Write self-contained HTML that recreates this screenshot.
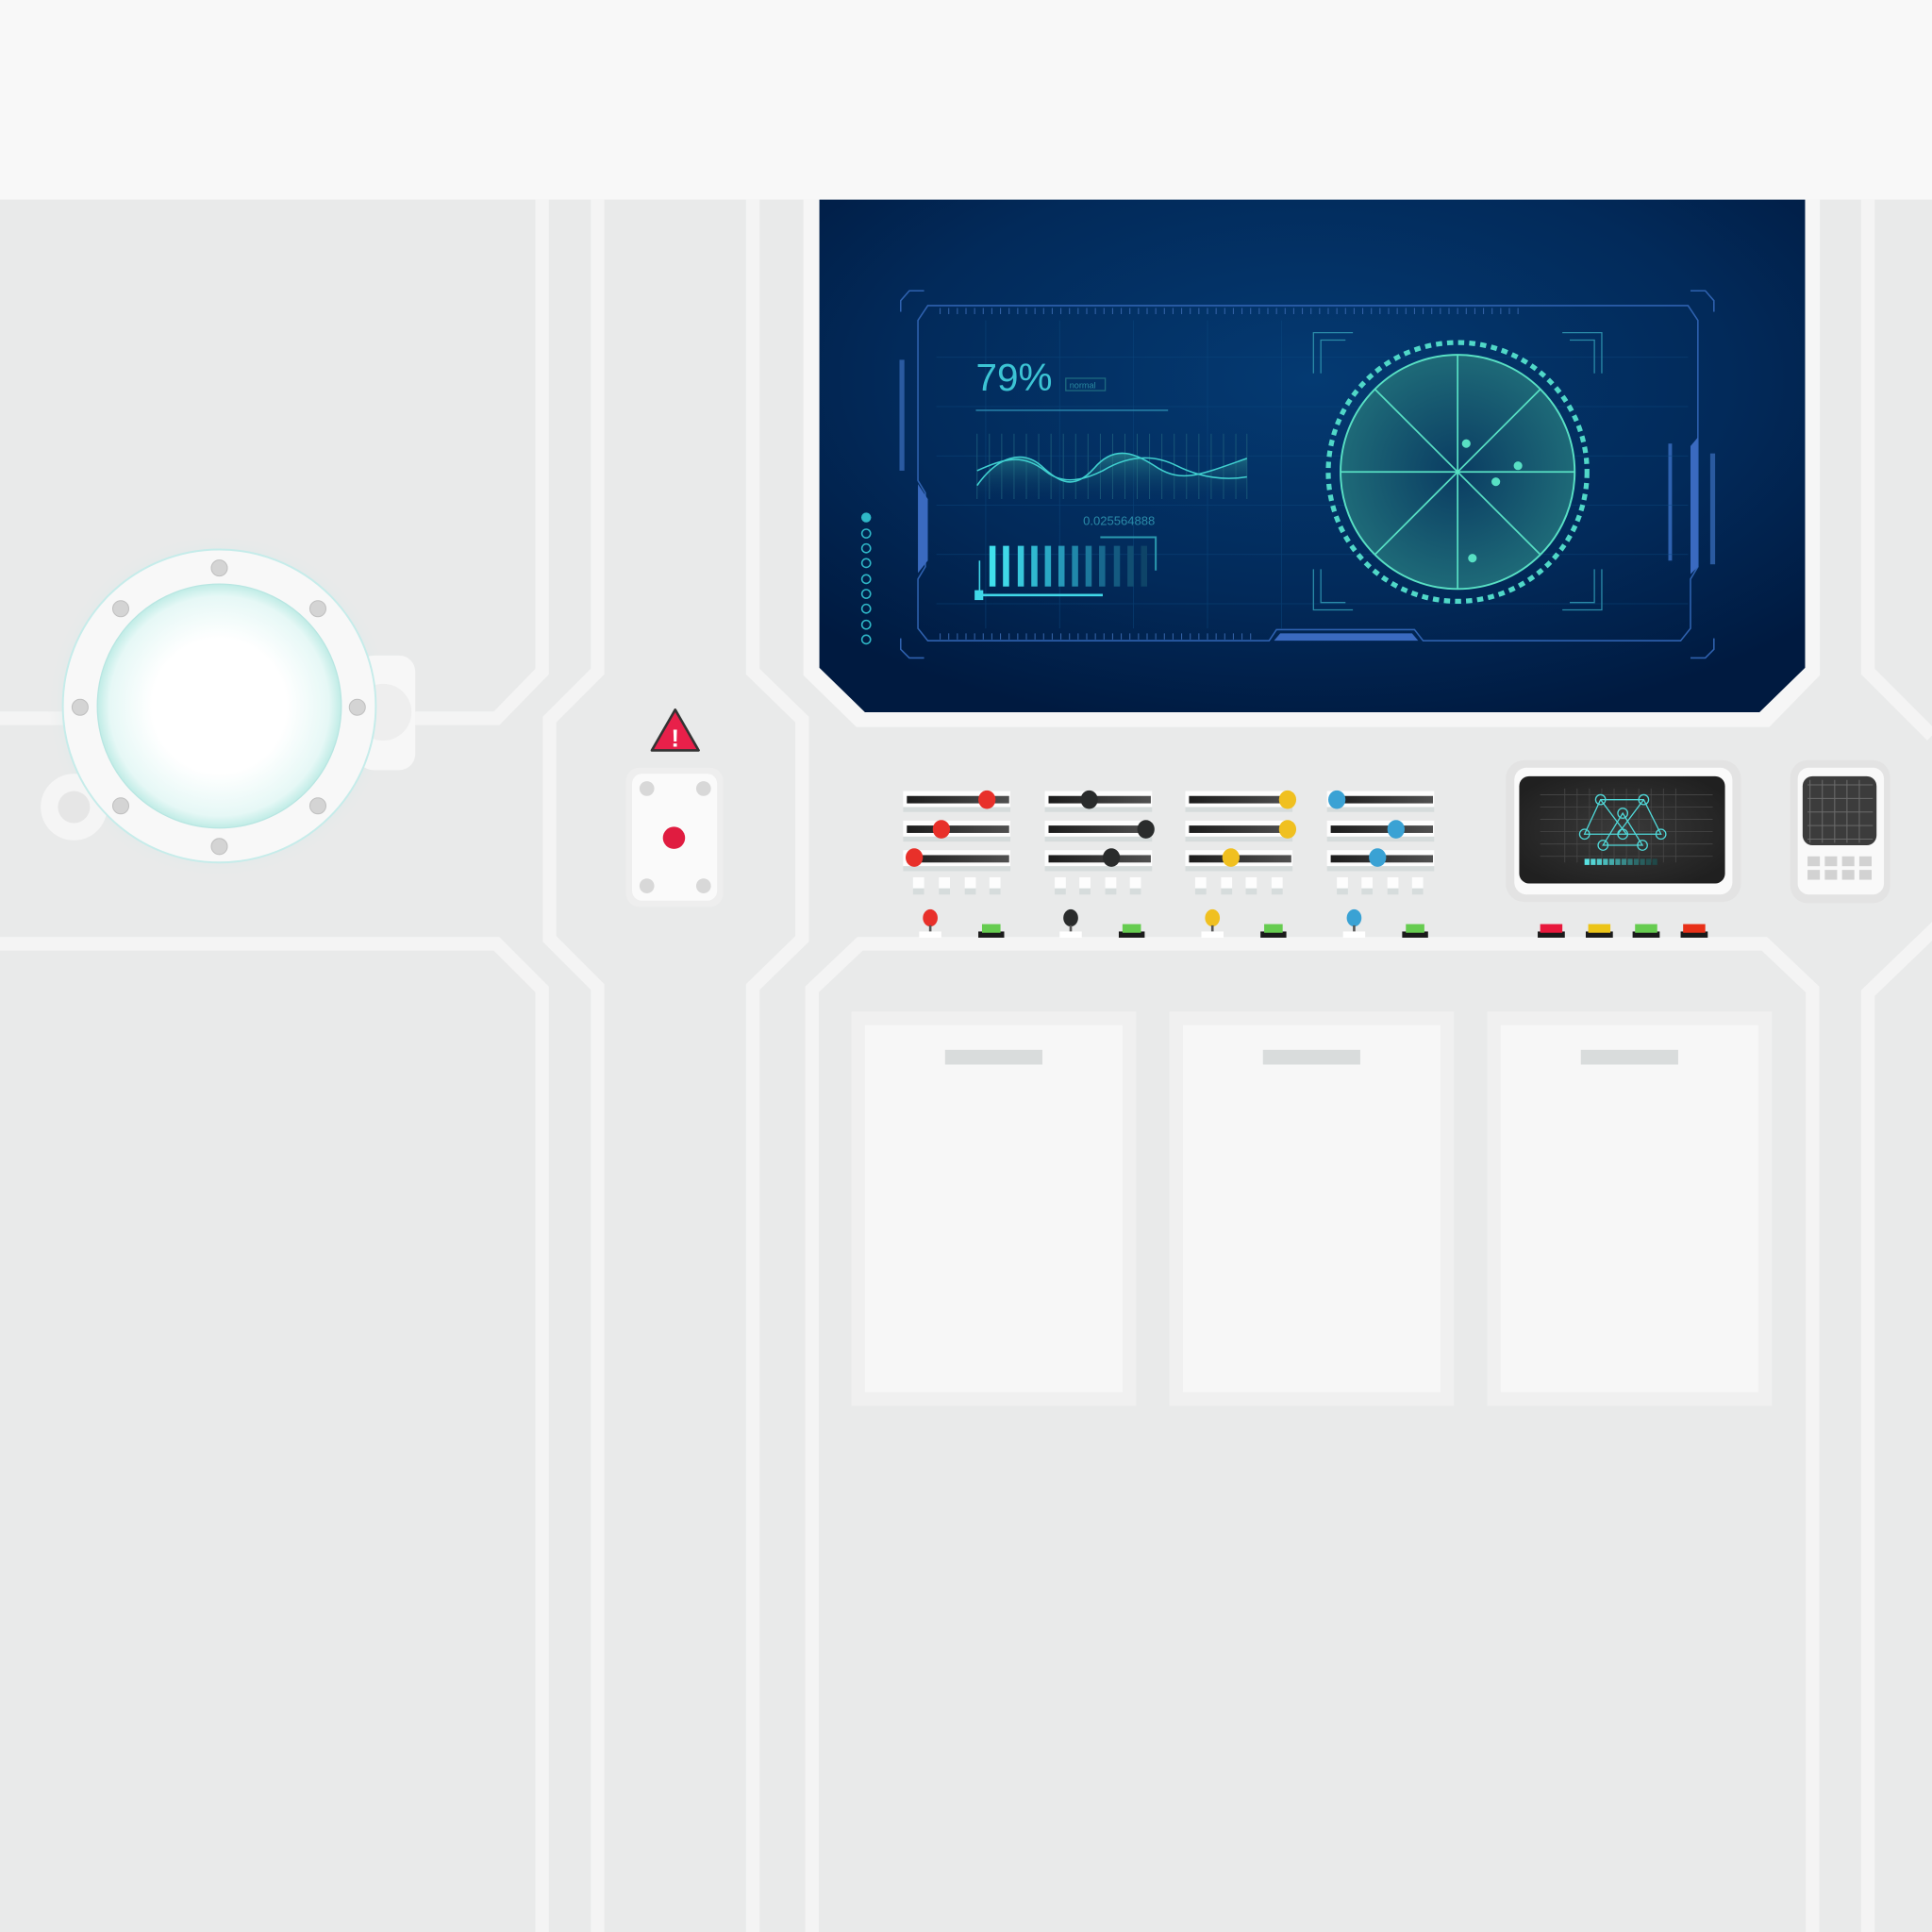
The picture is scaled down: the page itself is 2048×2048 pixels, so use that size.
<!DOCTYPE html>
<html><head><meta charset="utf-8"><style>
html,body{margin:0;padding:0;background:#e9eaea;}
svg{display:block;}
text{font-family:"Liberation Sans",sans-serif;}
</style></head><body>
<svg width="2048" height="2048" viewBox="0 0 1568 1568" xmlns="http://www.w3.org/2000/svg">
<defs>
<radialGradient id="scr" cx="0.5" cy="0.35" r="0.7">
<stop offset="0" stop-color="#043a72"/><stop offset="0.6" stop-color="#022a5a"/><stop offset="1" stop-color="#001a40"/>
</radialGradient>
<radialGradient id="glass" cx="0.5" cy="0.5" r="0.5">
<stop offset="0.55" stop-color="#ffffff"/><stop offset="0.9" stop-color="#e6f8f6"/><stop offset="1" stop-color="#c0ece6"/>
</radialGradient>
<radialGradient id="glow" cx="0.5" cy="0.5" r="0.5">
<stop offset="0.75" stop-color="#bfe8e4"/><stop offset="1" stop-color="#e9eaea" stop-opacity="0"/>
</radialGradient>
<radialGradient id="radar" cx="0.5" cy="0.5" r="0.5">
<stop offset="0" stop-color="#0a3c62"/><stop offset="1" stop-color="#1e6a78"/>
</radialGradient>
<linearGradient id="wv" x1="0" y1="0" x2="0" y2="1"><stop offset="0" stop-color="#2a8a90" stop-opacity="0.7"/><stop offset="1" stop-color="#0a3a60" stop-opacity="0"/></linearGradient>
<linearGradient id="trk" x1="0" x2="1"><stop offset="0" stop-color="#1c1c1c"/><stop offset="1" stop-color="#505050"/></linearGradient>
<radialGradient id="mon" cx="0.5" cy="0.5" r="0.6"><stop offset="0" stop-color="#3a3a3a"/><stop offset="1" stop-color="#202020"/></radialGradient>
</defs>
<rect width="1568" height="1568" fill="#e9eaea"/>
<rect width="1568" height="162" fill="#f8f8f8"/>
<!-- seams -->
<g fill="none" stroke="#f4f4f4" stroke-width="11" stroke-linejoin="miter">
<polyline points="440,162 440,545 403,583 0,583"/>
<polyline points="0,766 403,766 440,803 440,1568"/>
<polyline points="485,162 485,545 446,584 446,762 485,801 485,1568"/>
<polyline points="611,162 611,545 651,584 651,762 611,801 611,1568"/>
<polyline points="659,1568 659,803 698,766 1432,766 1471,803 1471,1568"/>
<polyline points="1516,162 1516,545 1568,597"/>
<polyline points="1572,752 1516,806 1516,1568"/>
</g>
<!-- screen frame -->
<polygon points="652,162 1477,162 1477,548 1436,590 695,590 652,548" fill="#f6f6f6"/>
<polygon points="665,162 1465,162 1465,542 1428,578 702,578 665,542" fill="url(#scr)"/>
<!-- HUD -->
<g fill="none" stroke="#2f62b0" stroke-width="1.2">
<polyline points="750,236 738,236 731,244 731,253"/>
<polyline points="1372,236 1384,236 1391,244 1391,253"/>
<polyline points="731,518 731,527 738,534 750,534"/>
<polyline points="1391,518 1391,527 1384,534 1372,534"/>
<polygon points="753,248 1370,248 1378,260 1378,460 1372,470 1372,510 1364,520 1155,520 1148,511 1036,511 1030,520 753,520 745,510 745,470 751,460 751,400 745,390 745,260"/>
</g>
<polygon points="745,393 753,405 753,455 745,465" fill="#3a6ac0"/>
<polygon points="1378,355 1372,362 1372,466 1378,460" fill="#3a6ac0"/>
<rect x="1354" y="360" width="3" height="95" fill="#2f62b0"/>
<polygon points="1034,520 1039,514 1146,514 1151,520" fill="#3a6ac0"/>
<g stroke="#3463a8" stroke-width="0.8">
<path d="M763 250v5M770 250v5M777 250v5M784 250v5M791 250v5M798 250v5M805 250v5M812 250v5M819 250v5M826 250v5M833 250v5M840 250v5M847 250v5M854 250v5M861 250v5M868 250v5M875 250v5M882 250v5M889 250v5M896 250v5M903 250v5M910 250v5M917 250v5M924 250v5M931 250v5M938 250v5M945 250v5M952 250v5M959 250v5M966 250v5M973 250v5M980 250v5M987 250v5M994 250v5M1001 250v5M1008 250v5M1015 250v5M1022 250v5M1029 250v5M1036 250v5M1043 250v5M1050 250v5M1057 250v5M1064 250v5M1071 250v5M1078 250v5M1085 250v5M1092 250v5M1099 250v5M1106 250v5M1113 250v5M1120 250v5M1127 250v5M1134 250v5M1141 250v5M1148 250v5M1155 250v5M1162 250v5M1169 250v5M1176 250v5M1183 250v5M1190 250v5M1197 250v5M1204 250v5M1211 250v5M1218 250v5M1225 250v5M1232 250v5"/>
<path d="M763 514v5M770 514v5M777 514v5M784 514v5M791 514v5M798 514v5M805 514v5M812 514v5M819 514v5M826 514v5M833 514v5M840 514v5M847 514v5M854 514v5M861 514v5M868 514v5M875 514v5M882 514v5M889 514v5M896 514v5M903 514v5M910 514v5M917 514v5M924 514v5M931 514v5M938 514v5M945 514v5M952 514v5M959 514v5M966 514v5M973 514v5M980 514v5M987 514v5M994 514v5M1001 514v5M1008 514v5M1015 514v5"/>
</g>
<g fill="#2a5aa0"><rect x="730" y="292" width="4" height="90"/><rect x="1388" y="368" width="4" height="90"/></g>
<g stroke="#0c4a80" stroke-width="0.6" opacity="0.6">
<path d="M760 290H1370M760 330H1370M760 370H1370M760 410H1370M760 450H1370M760 490H1370M800 260V510M860 260V510M920 260V510M980 260V510M1040 260V510"/>
</g>
<g fill="none" stroke="#2fb8c8" stroke-width="1.2">
<circle cx="703" cy="433" r="3.5"/><circle cx="703" cy="445" r="3.5"/><circle cx="703" cy="457" r="3.5"/><circle cx="703" cy="470" r="3.5"/><circle cx="703" cy="482" r="3.5"/><circle cx="703" cy="494" r="3.5"/><circle cx="703" cy="507" r="3.5"/><circle cx="703" cy="519" r="3.5"/>
</g>
<circle cx="703" cy="420" r="4" fill="#2fb8c8"/>
<text x="792" y="317" font-size="31" fill="#3cc4d4">79%</text>
<rect x="865" y="307" width="32" height="10" fill="none" stroke="#1e6a80" stroke-width="1"/>
<text x="868" y="315" font-size="7" fill="#2a8aa0">normal</text>
<line x1="792" y1="333" x2="948" y2="333" stroke="#2a8ab0" stroke-width="1"/>
<g stroke="#1a5a7a" stroke-width="0.7"><path d="M793 352V405M803 352V405M813 352V405M823 352V405M833 352V405M843 352V405M853 352V405M863 352V405M873 352V405M883 352V405M893 352V405M903 352V405M913 352V405M923 352V405M933 352V405M943 352V405M953 352V405M963 352V405M973 352V405M983 352V405M993 352V405M1003 352V405M1012 352V405"/></g>
<path d="M793 394 C810 370,830 365,845 378 C860 392,872 398,888 380 C905 360,922 368,940 380 C960 392,975 385,1012 372 L1012 405 L793 405Z" fill="url(#wv)"/>
<path d="M793 394 C810 370,830 365,845 378 C860 392,872 398,888 380 C905 360,922 368,940 380 C960 392,975 385,1012 372" fill="none" stroke="#40d0d0" stroke-width="1.2"/>
<path d="M793 382 C815 372,830 368,848 382 C860 392,875 392,895 382 C915 370,935 368,955 378 C975 388,995 390,1012 387" fill="none" stroke="#40d0d0" stroke-width="1.2"/>
<text x="879" y="426" font-size="10" fill="#2a8aa8">0.025564888</text>
<path d="M893 436H938V463" fill="none" stroke="#2a9ab0" stroke-width="1.5"/>
<g>
<rect x="803" y="443" width="5" height="33" fill="#40e0ec"/>
<rect x="814" y="443" width="5" height="33" fill="#40d8e8"/>
<rect x="826" y="443" width="5" height="33" fill="#38c8dc"/>
<rect x="837" y="443" width="5" height="33" fill="#30b8d0"/>
<rect x="848" y="443" width="5" height="33" fill="#2aa8c4"/>
<rect x="859" y="443" width="5" height="33" fill="#2698b8"/>
<rect x="870" y="443" width="5" height="33" fill="#2088aa"/>
<rect x="881" y="443" width="5" height="33" fill="#1c789c"/>
<rect x="892" y="443" width="5" height="33" fill="#18688e"/>
<rect x="904" y="443" width="5" height="33" fill="#145a80"/>
<rect x="915" y="443" width="5" height="33" fill="#114e72"/>
<rect x="926" y="443" width="5" height="33" fill="#0e4468"/>
</g>
<line x1="795" y1="455" x2="795" y2="483" stroke="#40d8e8" stroke-width="1.2"/>
<line x1="795" y1="483" x2="895" y2="483" stroke="#40d8e8" stroke-width="2"/>
<rect x="791" y="479" width="7" height="8" fill="#40d8e8"/>
<g fill="none" stroke="#2a8aa8" stroke-width="1">
<path d="M1066 303V270H1098M1072 303V276H1092"/><path d="M1300 303V270H1268M1294 303V276H1274"/>
<path d="M1066 462V495H1098M1072 462V489H1092"/><path d="M1300 462V495H1268M1294 462V489H1274"/>
</g>
<circle cx="1183" cy="383" r="105" fill="none" stroke="#50d8c8" stroke-width="4" stroke-dasharray="5 4"/>
<circle cx="1183" cy="383" r="95" fill="url(#radar)" stroke="#58e0c4" stroke-width="1.5"/>
<g stroke="#58e0c4" stroke-width="1.3">
<line x1="1088" y1="383" x2="1278" y2="383"/><line x1="1183" y1="288" x2="1183" y2="478"/>
<line x1="1116" y1="316" x2="1250" y2="450"/><line x1="1250" y1="316" x2="1116" y2="450"/>
</g>
<g fill="#58e0c4"><circle cx="1190" cy="360" r="3.5"/><circle cx="1232" cy="378" r="3.5"/><circle cx="1214" cy="391" r="3.5"/><circle cx="1195" cy="453" r="3.5"/></g>
<!-- porthole -->
<circle cx="178" cy="573" r="140" fill="url(#glow)" opacity="0.8"/>
<rect x="290" y="532" width="47" height="93" rx="13" fill="#f7f7f7"/>
<circle cx="311" cy="578" r="23" fill="#eeeeee"/>
<circle cx="60" cy="655" r="27" fill="#f5f5f5"/>
<circle cx="60" cy="655" r="13" fill="#e6e6e6"/>
<circle cx="178" cy="573" r="127" fill="#f8f8f8" stroke="#c6ecea" stroke-width="1.5"/>
<circle cx="178" cy="573" r="99" fill="url(#glass)" stroke="#b8e6e2" stroke-width="1"/>
<g fill="#d4d4d4" stroke="#c0c0c0" stroke-width="0.8">
<circle cx="178" cy="461" r="6.5"/><circle cx="178" cy="687" r="6.5"/><circle cx="65" cy="574" r="6.5"/><circle cx="290" cy="574" r="6.5"/>
<circle cx="98" cy="494" r="6.5"/><circle cx="258" cy="494" r="6.5"/><circle cx="98" cy="654" r="6.5"/><circle cx="258" cy="654" r="6.5"/>
</g>
<polygon points="548,576 567,609 529,609" fill="#e8204a" stroke="#333" stroke-width="2" stroke-linejoin="round"/>
<text x="548" y="606" font-size="20" font-weight="bold" fill="#fff" text-anchor="middle">!</text>
<rect x="508" y="623" width="79" height="113" rx="11" fill="#eeeeee"/>
<rect x="513" y="628" width="69" height="103" rx="8" fill="#fafafa"/>
<g fill="#d8d8d8"><circle cx="525" cy="640" r="6"/><circle cx="571" cy="640" r="6"/><circle cx="525" cy="719" r="6"/><circle cx="571" cy="719" r="6"/></g>
<circle cx="547" cy="680" r="9" fill="#e01c40"/>
<!-- sliders -->
<g fill="#fdfdfd"><rect x="733" y="642" width="87" height="13"/><rect x="733" y="666" width="87" height="13"/><rect x="733" y="690" width="87" height="13"/>
<rect x="848" y="642" width="87" height="13"/><rect x="848" y="666" width="87" height="13"/><rect x="848" y="690" width="87" height="13"/>
<rect x="962" y="642" width="87" height="13"/><rect x="962" y="666" width="87" height="13"/><rect x="962" y="690" width="87" height="13"/>
<rect x="1077" y="642" width="87" height="13"/><rect x="1077" y="666" width="87" height="13"/><rect x="1077" y="690" width="87" height="13"/></g>
<g fill="#d6dcdc"><rect x="733" y="655" width="87" height="4"/><rect x="733" y="679" width="87" height="4"/><rect x="733" y="703" width="87" height="4"/>
<rect x="848" y="655" width="87" height="4"/><rect x="848" y="679" width="87" height="4"/><rect x="848" y="703" width="87" height="4"/>
<rect x="962" y="655" width="87" height="4"/><rect x="962" y="679" width="87" height="4"/><rect x="962" y="703" width="87" height="4"/>
<rect x="1077" y="655" width="87" height="4"/><rect x="1077" y="679" width="87" height="4"/><rect x="1077" y="703" width="87" height="4"/></g>
<g fill="url(#trk)"><rect x="736" y="646" width="83" height="6"/><rect x="736" y="670" width="83" height="6"/><rect x="736" y="694" width="83" height="6"/>
<rect x="851" y="646" width="83" height="6"/><rect x="851" y="670" width="83" height="6"/><rect x="851" y="694" width="83" height="6"/>
<rect x="965" y="646" width="83" height="6"/><rect x="965" y="670" width="83" height="6"/><rect x="965" y="694" width="83" height="6"/>
<rect x="1080" y="646" width="83" height="6"/><rect x="1080" y="670" width="83" height="6"/><rect x="1080" y="694" width="83" height="6"/></g>
<g fill="#e8302a"><ellipse cx="801" cy="649" rx="7" ry="7.5"/><ellipse cx="764" cy="673" rx="7" ry="7.5"/><ellipse cx="742" cy="696" rx="7" ry="7.5"/><ellipse cx="755" cy="745" rx="6" ry="7"/></g>
<g fill="#2a2c2c"><ellipse cx="884" cy="649" rx="7" ry="7.5"/><ellipse cx="930" cy="673" rx="7" ry="7.5"/><ellipse cx="902" cy="696" rx="7" ry="7.5"/><ellipse cx="869" cy="745" rx="6" ry="7"/></g>
<g fill="#f0c020"><ellipse cx="1045" cy="649" rx="7" ry="7.5"/><ellipse cx="1045" cy="673" rx="7" ry="7.5"/><ellipse cx="999" cy="696" rx="7" ry="7.5"/><ellipse cx="984" cy="745" rx="6" ry="7"/></g>
<g fill="#3aa2d4"><ellipse cx="1085" cy="649" rx="7" ry="7.5"/><ellipse cx="1133" cy="673" rx="7" ry="7.5"/><ellipse cx="1118" cy="696" rx="7" ry="7.5"/><ellipse cx="1099" cy="745" rx="6" ry="7"/></g>
<g fill="#fdfdfd">
<rect x="741" y="712" width="9" height="9"/><rect x="762" y="712" width="9" height="9"/><rect x="783" y="712" width="9" height="9"/><rect x="803" y="712" width="9" height="9"/>
<rect x="856" y="712" width="9" height="9"/><rect x="876" y="712" width="9" height="9"/><rect x="897" y="712" width="9" height="9"/><rect x="917" y="712" width="9" height="9"/>
<rect x="970" y="712" width="9" height="9"/><rect x="991" y="712" width="9" height="9"/><rect x="1011" y="712" width="9" height="9"/><rect x="1032" y="712" width="9" height="9"/>
<rect x="1085" y="712" width="9" height="9"/><rect x="1105" y="712" width="9" height="9"/><rect x="1126" y="712" width="9" height="9"/><rect x="1146" y="712" width="9" height="9"/>
</g>
<g fill="#d6dcdc">
<rect x="741" y="721" width="9" height="5"/><rect x="762" y="721" width="9" height="5"/><rect x="783" y="721" width="9" height="5"/><rect x="803" y="721" width="9" height="5"/>
<rect x="856" y="721" width="9" height="5"/><rect x="876" y="721" width="9" height="5"/><rect x="897" y="721" width="9" height="5"/><rect x="917" y="721" width="9" height="5"/>
<rect x="970" y="721" width="9" height="5"/><rect x="991" y="721" width="9" height="5"/><rect x="1011" y="721" width="9" height="5"/><rect x="1032" y="721" width="9" height="5"/>
<rect x="1085" y="721" width="9" height="5"/><rect x="1105" y="721" width="9" height="5"/><rect x="1126" y="721" width="9" height="5"/><rect x="1146" y="721" width="9" height="5"/>
</g>
<g fill="#555"><rect x="754" y="751" width="2" height="5"/><rect x="868" y="751" width="2" height="5"/><rect x="983" y="751" width="2" height="5"/><rect x="1098" y="751" width="2" height="5"/></g>
<g fill="#fff"><rect x="746" y="756" width="18" height="5"/><rect x="860" y="756" width="18" height="5"/><rect x="975" y="756" width="18" height="5"/><rect x="1090" y="756" width="18" height="5"/></g>
<g fill="#1a1a1a"><rect x="794" y="756" width="21" height="5"/><rect x="908" y="756" width="21" height="5"/><rect x="1023" y="756" width="21" height="5"/><rect x="1138" y="756" width="21" height="5"/>
<rect x="1248" y="756" width="22" height="5"/><rect x="1287" y="756" width="22" height="5"/><rect x="1325" y="756" width="22" height="5"/><rect x="1364" y="756" width="22" height="5"/></g>
<g fill="#66cc50"><rect x="797" y="750" width="15" height="7"/><rect x="911" y="750" width="15" height="7"/><rect x="1026" y="750" width="15" height="7"/><rect x="1141" y="750" width="15" height="7"/><rect x="1327" y="750" width="18" height="7"/></g>
<rect x="1250" y="750" width="18" height="7" fill="#e8183c"/>
<rect x="1289" y="750" width="18" height="7" fill="#ecc418"/>
<rect x="1366" y="750" width="18" height="7" fill="#e83018"/>
<!-- monitor -->
<rect x="1222" y="617" width="191" height="115" rx="15" fill="#e3e3e3"/>
<rect x="1229" y="623" width="177" height="103" rx="10" fill="#fafafa"/>
<rect x="1233" y="630" width="167" height="87" rx="8" fill="url(#mon)"/>
<g stroke="#484848" stroke-width="0.6"><path d="M1250 645H1390M1250 655H1390M1250 665H1390M1250 675H1390M1250 685H1390M1250 695H1390M1270 640V700M1280 640V700M1290 640V700M1300 640V700M1310 640V700M1320 640V700M1330 640V700M1340 640V700M1350 640V700M1360 640V700"/></g>
<g fill="none" stroke="#50d8d8" stroke-width="1"><path d="M1299 649L1286 677H1348L1334 649Z"/><path d="M1299 649L1320 677M1334 649L1313 677"/><path d="M1317 660L1301 686H1333Z"/>
<circle cx="1299" cy="649" r="4"/><circle cx="1334" cy="649" r="4"/><circle cx="1317" cy="660" r="4"/><circle cx="1286" cy="677" r="4"/><circle cx="1317" cy="677" r="4"/><circle cx="1348" cy="677" r="4"/><circle cx="1301" cy="686" r="4"/><circle cx="1333" cy="686" r="4"/></g>
<g><rect x="1286" y="697" width="4" height="5" fill="#58e0e0"/><rect x="1291" y="697" width="4" height="5" fill="#54d4d4"/><rect x="1296" y="697" width="4" height="5" fill="#50c8c8"/><rect x="1301" y="697" width="4" height="5" fill="#4ababa"/><rect x="1306" y="697" width="4" height="5" fill="#44aaaa"/><rect x="1311" y="697" width="4" height="5" fill="#3e9a9a"/><rect x="1316" y="697" width="4" height="5" fill="#388a8a"/><rect x="1321" y="697" width="4" height="5" fill="#327a7a"/><rect x="1326" y="697" width="4" height="5" fill="#2c6a6a"/><rect x="1331" y="697" width="4" height="5" fill="#285e5e"/><rect x="1336" y="697" width="4" height="5" fill="#245252"/><rect x="1341" y="697" width="4" height="5" fill="#204848"/></g>
<rect x="1453" y="617" width="81" height="116" rx="14" fill="#e3e3e3"/>
<rect x="1459" y="623" width="70" height="103" rx="9" fill="#f9f9f9"/>
<rect x="1463" y="630" width="60" height="56" rx="8" fill="#3c3c3c"/>
<g stroke="#6a6a6a" stroke-width="0.8"><path d="M1467 637H1520M1467 648H1520M1467 659H1520M1467 670H1520M1467 681H1520M1469 633V684M1479 633V684M1489 633V684M1499 633V684M1509 633V684"/></g>
<g fill="#d2d2d2"><rect x="1467" y="695" width="10" height="8"/><rect x="1481" y="695" width="10" height="8"/><rect x="1495" y="695" width="10" height="8"/><rect x="1509" y="695" width="10" height="8"/>
<rect x="1467" y="706" width="10" height="8"/><rect x="1481" y="706" width="10" height="8"/><rect x="1495" y="706" width="10" height="8"/><rect x="1509" y="706" width="10" height="8"/></g>
<!-- cards -->
<rect x="691" y="821" width="231" height="320" fill="#f0f0f0"/><rect x="702" y="832" width="209" height="298" fill="#f7f7f7"/><rect x="767" y="852" width="79" height="12" fill="#d9dcdc"/>
<rect x="949" y="821" width="231" height="320" fill="#f0f0f0"/><rect x="960" y="832" width="209" height="298" fill="#f7f7f7"/><rect x="1025" y="852" width="79" height="12" fill="#d9dcdc"/>
<rect x="1207" y="821" width="231" height="320" fill="#f0f0f0"/><rect x="1218" y="832" width="209" height="298" fill="#f7f7f7"/><rect x="1283" y="852" width="79" height="12" fill="#d9dcdc"/>
</svg>
</body></html>
